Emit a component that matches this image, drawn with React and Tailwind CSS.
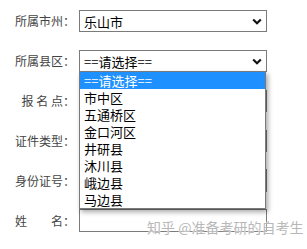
import React from 'react';

const font = { fontFamily: '"Noto Sans CJK SC", "Noto Sans", sans-serif' };

const Chevron = () => (
  <svg width="10" height="7" viewBox="0 0 10 7" className="shrink-0">
    <polyline points="1.2,1.5 5,5.2 8.8,1.5" fill="none" stroke="#111" strokeWidth="2.2" />
  </svg>
);

const Label = ({ children }) => (
  <div className="w-[75px] shrink-0 text-right text-[12px] text-[#444] whitespace-pre leading-none">
    {children}
  </div>
);

const Select = ({ value }) => (
  <div className="w-[188px] h-[22px] border border-[#7a7a7a] bg-white flex items-center justify-between pl-[4px] pr-[4px] text-[13px] text-black leading-none">
    <span>{value}</span>
    <Chevron />
  </div>
);

const options = ['==请选择==', '市中区', '五通桥区', '金口河区', '井研县', '沐川县', '峨边县', '马边县'];

const App = () => {
  return (
    <div className="w-[307px] h-[249px] bg-white overflow-hidden relative" style={font}>
      <div className="flex flex-col gap-[18px] pt-[10px]">
        {/* city */}
        <div className="flex items-center h-[22px]">
          <Label>所属市州：</Label>
          <div className="ml-[4px]">
            <Select value="乐山市" />
          </div>
        </div>

        {/* county, with open list */}
        <div className="flex items-center h-[22px]">
          <Label>所属县区：</Label>
          <div className="ml-[4px] relative">
            <Select value="==请选择==" />
            <div className="absolute left-0 top-[21px] w-[187px] border border-[#7a7a7a] bg-white shadow-[2px_3px_5px_rgba(0,0,0,0.35)] z-10">
              {options.map((opt, i) => (
                <div
                  key={opt}
                  className={`h-[17px] flex items-center pl-[4px] text-[13px] leading-none ${
                    i === 0 ? 'bg-[#1e90ff] text-white' : 'text-black'
                  }`}
                >
                  {opt}
                </div>
              ))}
            </div>
          </div>
        </div>

        <div className="flex items-center h-[22px]">
          <Label>报 名 点：</Label>
          <div className="ml-[4px] w-[188px] h-[22px] border border-[#7a7a7a] bg-white" />
        </div>

        <div className="flex items-center h-[22px]">
          <Label>证件类型：</Label>
          <div className="ml-[4px] w-[188px] h-[22px] border border-[#7a7a7a] bg-white" />
        </div>

        <div className="flex items-center h-[23px] -mt-[1px]">
          <Label>身份证号：</Label>
          <div className="ml-[4px] w-[188px] h-[23px] border border-[#7a7a7a] bg-white" />
        </div>

        <div className="flex items-center h-[23px] -mt-[1px]">
          <Label>姓　　名：</Label>
          <div className="ml-[4px] w-[188px] h-[23px] border border-[#7a7a7a] bg-white" />
        </div>
      </div>

      {/* watermark */}
      <div className="absolute left-[147px] top-[220px] text-[14px] leading-none text-[#b8b8b8] whitespace-nowrap [text-shadow:0_0_2px_#fff,0_0_1px_#fff]">
        知乎 @准备考研的自考生
      </div>
    </div>
  );
};

export default App;
